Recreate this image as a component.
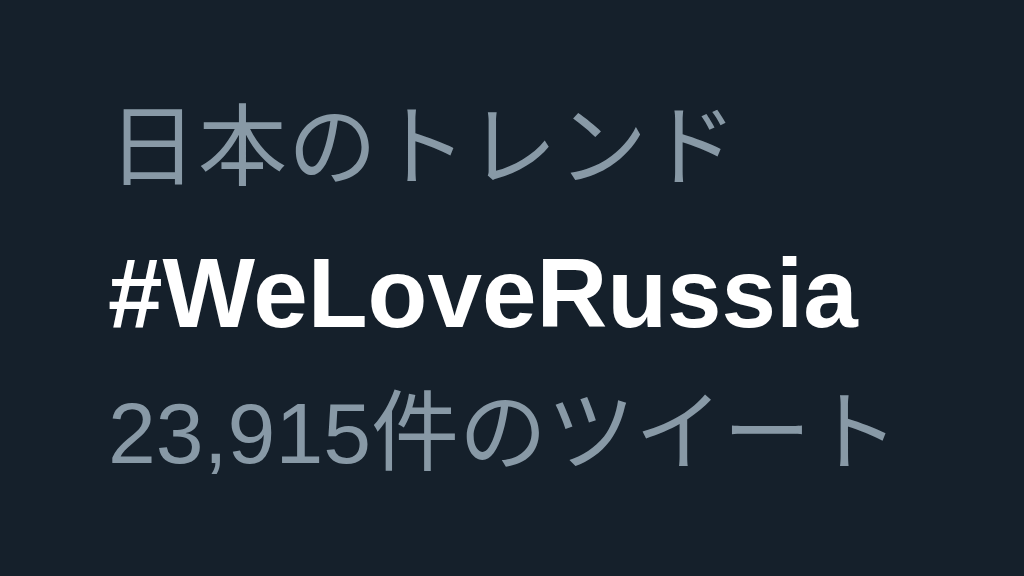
export default function App() {
  return (
    <div className="w-[1024px] h-[576px] bg-[#15202b] pl-[108px] pt-[94px] font-['Liberation_Sans','Noto_Sans_CJK_JP',sans-serif] overflow-hidden">
      <div className="text-[89px] leading-[106px] tracking-[1px] text-[#8899a6] whitespace-nowrap">日本のトレンド</div>
      <div className="mt-[33px] text-[98px] leading-[120px] font-bold text-white whitespace-nowrap">#WeLoveRussia</div>
      <div className="mt-[27px] text-[86px] leading-[106px] text-[#8899a6] whitespace-nowrap">
        23,915<span className="text-[88px]">件のツイート</span>
      </div>
    </div>
  );
}
